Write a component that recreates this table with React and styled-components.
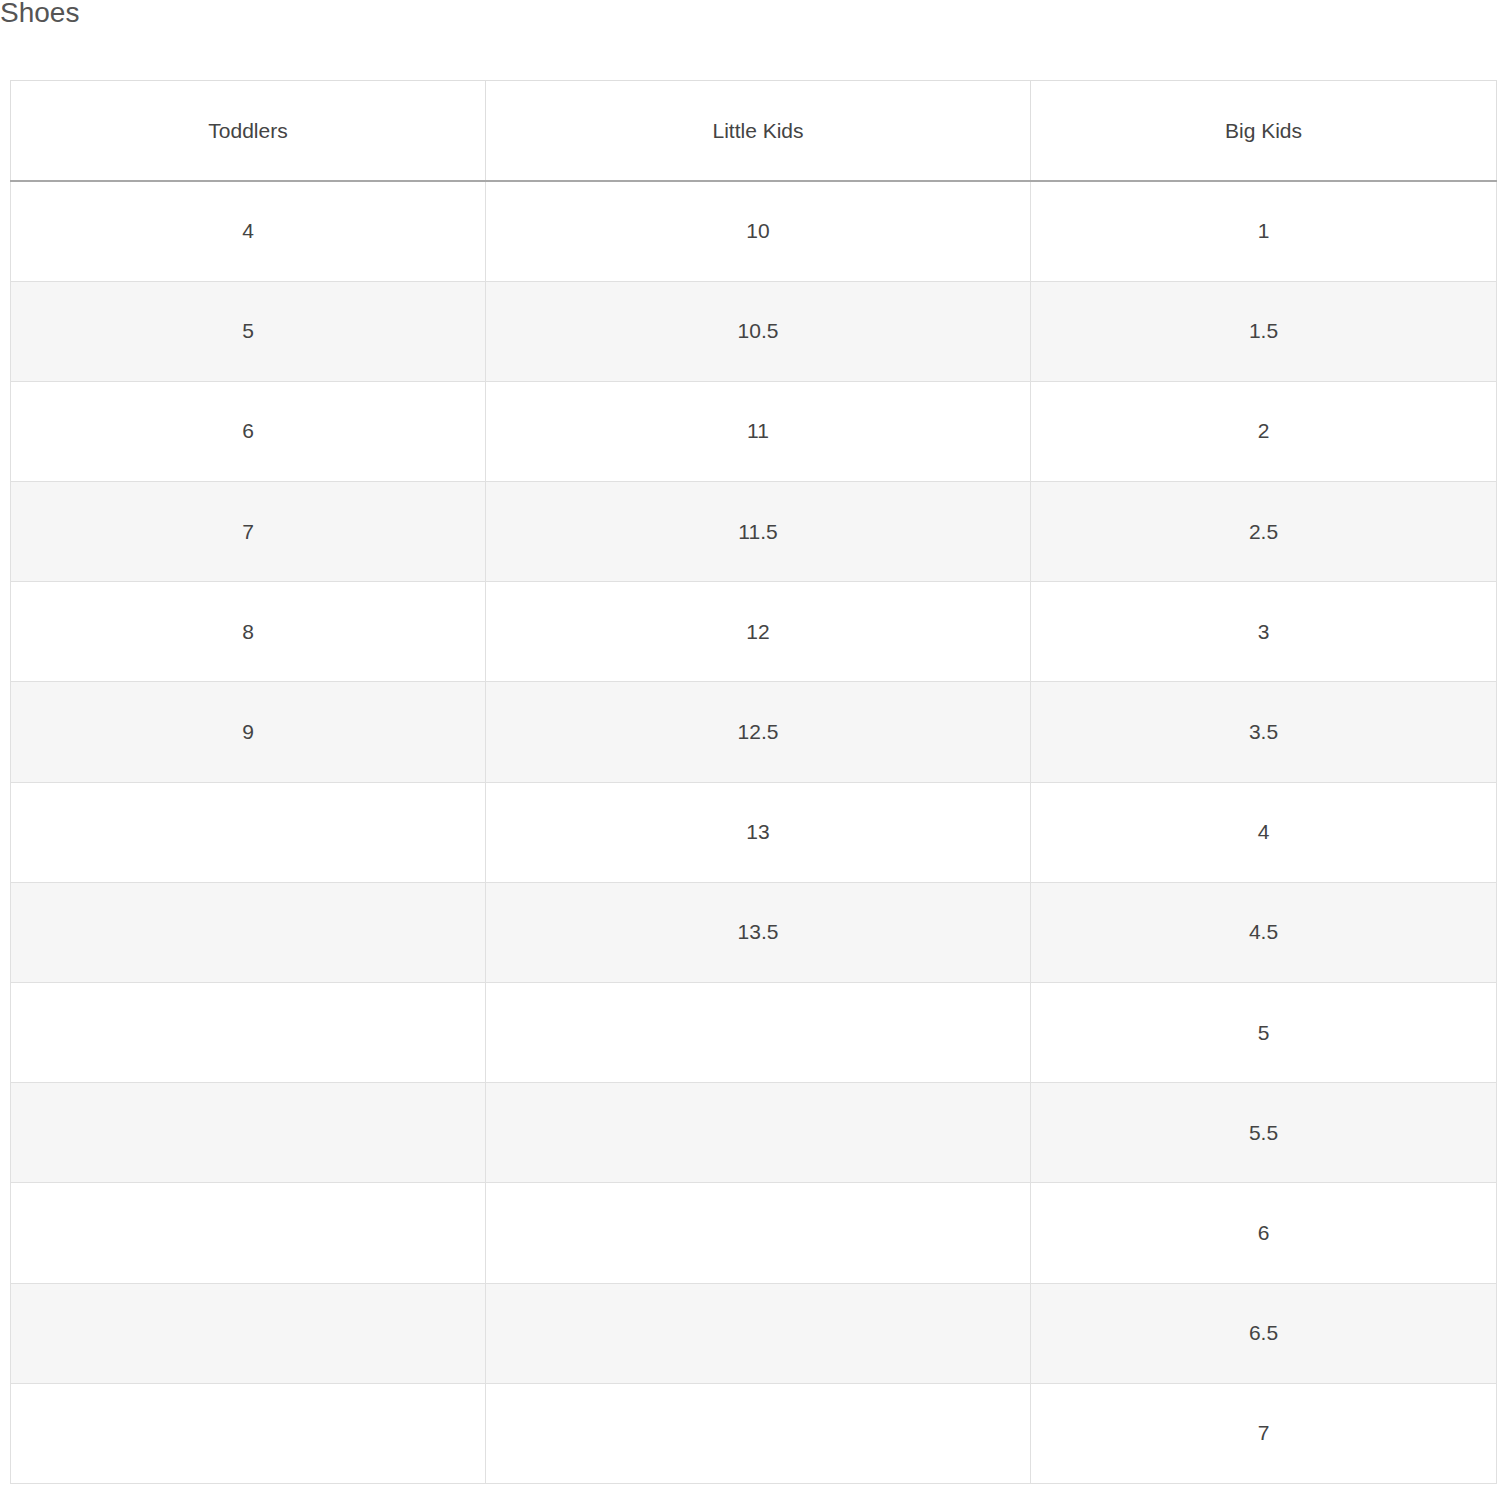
import React from "react";
import styled, { createGlobalStyle } from "styled-components";

const GlobalStyle = createGlobalStyle`
  body {
    margin: 0;
    background: #ffffff;
    font-family: "Liberation Sans", Arial, sans-serif;
  }
`;

const sizes = [
  ["4", "10", "1"],
  ["5", "10.5", "1.5"],
  ["6", "11", "2"],
  ["7", "11.5", "2.5"],
  ["8", "12", "3"],
  ["9", "12.5", "3.5"],
  ["", "13", "4"],
  ["", "13.5", "4.5"],
  ["", "", "5"],
  ["", "", "5.5"],
  ["", "", "6"],
  ["", "", "6.5"],
  ["", "", "7"],
];

const App = () => {
  return (
    <Page>
      <GlobalStyle />
      <Title>Shoes</Title>
      <SizeTable>
        <colgroup>
          <col style={{ width: "475px" }} />
          <col style={{ width: "545px" }} />
          <col style={{ width: "466px" }} />
        </colgroup>
        <thead>
          <tr>
            <HeadCell>Toddlers</HeadCell>
            <HeadCell>Little Kids</HeadCell>
            <HeadCell>Big Kids</HeadCell>
          </tr>
        </thead>
        <tbody>
          {sizes.map((row, i) => (
            <Row key={i} $striped={i % 2 === 1}>
              {row.map((value, j) => (
                <Cell key={j}>{value}</Cell>
              ))}
            </Row>
          ))}
        </tbody>
      </SizeTable>
    </Page>
  );
};

export default App;

const Page = styled.div`
  padding: 0;
`;

const Title = styled.h2`
  margin: 0 0 54px 0;
  font-size: 28px;
  line-height: 26px;
  font-weight: 400;
  color: #555555;
`;

const SizeTable = styled.table`
  margin-left: 10px;
  width: 1487px;
  border-collapse: collapse;
  table-layout: fixed;
  border: 1px solid #dedede;
`;

const HeadCell = styled.th`
  height: 99px;
  padding: 0;
  font-size: 21px;
  font-weight: 400;
  color: #444444;
  text-align: center;
  vertical-align: middle;
  border-left: 1px solid #dedede;
  border-right: 1px solid #dedede;
  border-bottom: 2px solid #a8a8a8;
`;

const Row = styled.tr`
  height: 100.2px;
  background: ${(p) => (p.$striped ? "#f6f6f6" : "#ffffff")};
`;

const Cell = styled.td`
  padding: 0;
  font-size: 21px;
  color: #444444;
  text-align: center;
  vertical-align: middle;
  border: 1px solid #e0e0e0;
`;
